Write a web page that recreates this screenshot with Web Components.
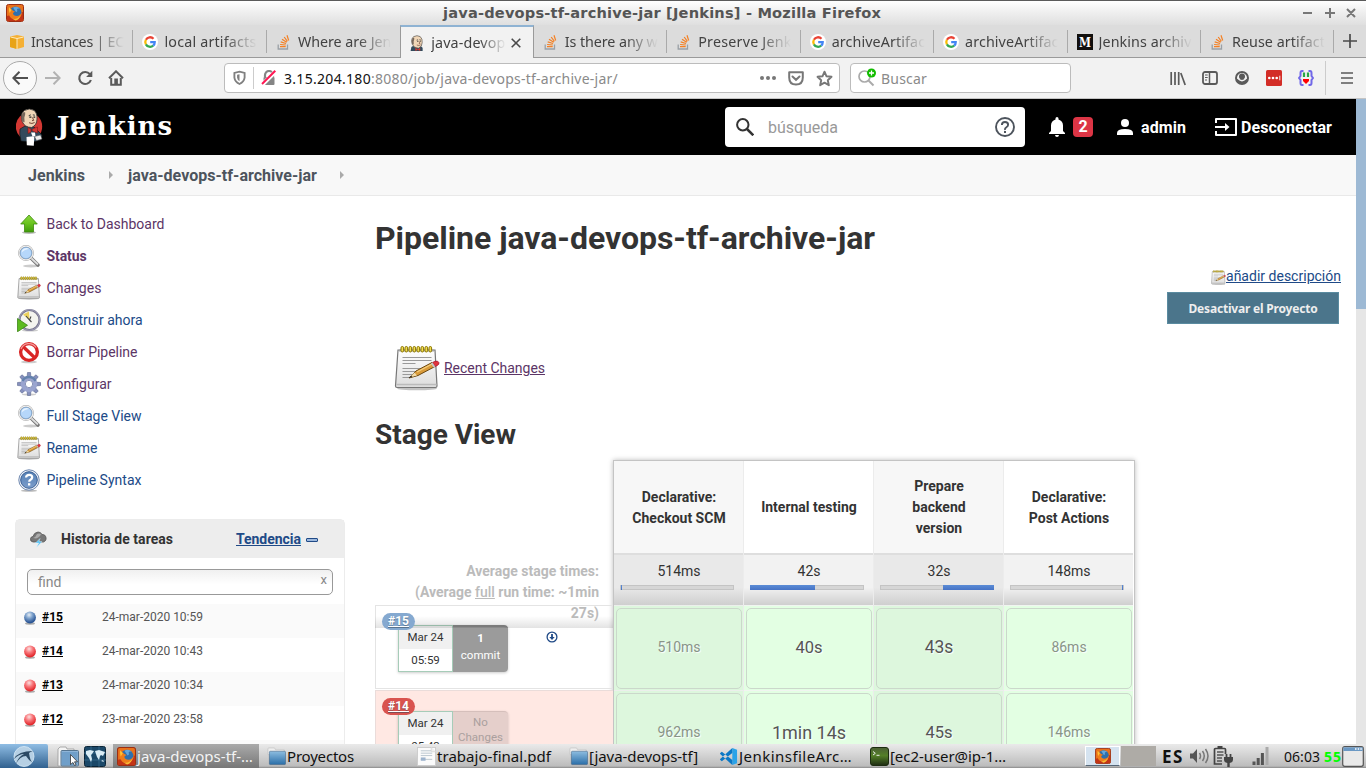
<!DOCTYPE html>
<html lang="es">
<head>
<meta charset="utf-8">
<title>java-devops-tf-archive-jar [Jenkins]</title>
<style>
html,body{margin:0;padding:0;width:1366px;height:768px;overflow:hidden;background:#fff;font-family:Roboto,sans-serif}
</style>
</head>
<body>
<desktop-screen></desktop-screen>
<script>
const define = (name, css, render) => customElements.define(name, class extends HTMLElement {
  constructor() { super(); this.attachShadow({mode: 'open'}); }
  connectedCallback() {
    if (this.ready) return;
    this.ready = true;
    this.shadowRoot.innerHTML = `<style>*{box-sizing:border-box}${css}</style>${render(k => this.getAttribute(k) || '', this)}`;
  }
});

const rings = [7, 11, 15, 19, 23, 27, 31, 35].map(x => `<rect x="${x}" y="1.500" width="2.600" height="5.500" rx="1.300"/>`).join('');
const notepad = `<g><ellipse cx="23" cy="43.500" rx="20" ry="1.800" fill="#999" opacity=".6"/><path d="M4 5h37l2 36q0 1.500-1.500 1.500H3q-1.500 0-1.500-1.500z" fill="url(#np)" stroke="#777" stroke-width="1.200"/><path d="M2.500 39.500h40" stroke="#bbb" stroke-width="1.600"/><path d="M8.500 12.500h29M8.500 15.500h29M8.500 18.500h13M8.500 23.500h28M8.500 26.500h20M8.500 29.500h14M8.500 32.500h8" stroke="#999" stroke-width="1"/><path d="M5 5.500h35" stroke="#a5a5a5" stroke-width="2"/><g fill="#f0dc50" stroke="#8a7400" stroke-width="1">${rings}</g><path d="M15 33l7-7 16-8.500 3 4-17 9z" fill="#d99b3a" stroke="#6b4710" stroke-width="1"/><path d="M23 27l15-8" stroke="#f6cf7d" stroke-width="1.300"/><path d="M15.500 32.500l5-5 2.500 3z" fill="#f2dca8"/><path d="M14.500 33l2.500-2.200 1.500 1.200z" fill="#222"/><path d="M38.500 17.500l2.500-1.300q3.300-.7 4 1.500.2 1.800-1.200 2.500l-2.500 1.400z" fill="#e0343c" stroke="#902" stroke-width=".6"/><path d="M36.800 18.400l1.700-.9 2.800 4.100-1.700.9z" fill="#c4c4c4"/></g><defs><linearGradient id="np" x2="0" y2="1"><stop offset="0" stop-color="#fff"/><stop offset="1" stop-color="#dcdcdc"/></linearGradient></defs>`;
const face = `<path d="M4 11Q2 4 6 1.500Q10-.8 14 1.500Q17 4 16.500 9Q16.500 14 12 16Q6 16 4 11z" fill="#f0d6b7" stroke="#333" stroke-width=".7"/><path d="M4.800 3Q2.600 6 4 11L6 11.500 5.800 7.500 6.500 5 6.500 3z" fill="#77685c"/><path d="M9.500 6l1.800-.7M13 5.300l1.700.3" stroke="#333" stroke-width=".8"/><path d="M10 7.300h1.800M13.500 7.200h1.500" stroke="#222" stroke-width="1"/><path d="M12.700 7.500l1 2.500-1.400.2M9.800 12q2.500 1.300 4.700-.2" fill="none" stroke="#6b3d2c" stroke-width=".8"/>`;
const mascotHead = `<path d="M2 20l1-5 3-2 8 0 3 3v4z" fill="#324a5c"/><g transform="translate(0 .5)">${face}</g><path d="M8 20v-4l3 2 3-2v4l-3-1.500z" fill="#d33833"/>`;
const lens = `<ellipse cx="14" cy="22" rx="8" ry="1.400" fill="#ccc"/><path d="M14 14l7 7" stroke="#777" stroke-width="3.600" stroke-linecap="round"/><path d="M14 14l7 6.500" stroke="#ddd" stroke-width="1.800"/><circle cx="9" cy="9" r="6.800" fill="#b6d7fa" stroke="#a5a5a5" stroke-width="2.200"/><circle cx="9" cy="9" r="6.900" fill="none" stroke="#eee" stroke-width="1.100"/><circle cx="9" cy="9" r="5.700" fill="none" stroke="#6f9dd0" stroke-width=".6"/><path d="M4.500 8.500a5 5 0 0 1 7.500-3.800Q7 6 4.500 8.500" fill="#e6f3ff"/>`;
const firefox = `<rect x=".5" y=".5" width="17" height="17" rx="2" fill="#e8711b" stroke="#9c2e12"/><path d="M1 12V17h16V8z" fill="#c33416"/><circle cx="9.500" cy="8.500" r="6" fill="#2f70ad"/><path d="M7 3.500q4-2 7 1-3-.5-3 1 1 2-1 2.500z" fill="#63a7dd"/><path d="M3 3Q1 10 5 14q5 3 9-1 2-2 2-5-2 4-5 4-4 0-4-3l2-1.500-2-.8z" fill="#ef7d1a"/><path d="M3 3q-.5 3 .5 6l2-3z" fill="#ffc234"/><path d="M5 14q5 3 10-3-2 5-5.500 5.500z" fill="#f9bb35"/>`;
const folder = `<path d="M1 2q0-1 1-1h6l1 2h9v5H1z" fill="#eee" stroke="#bbb" stroke-width=".6"/><rect x="2.500" y="4.500" width="17" height="14" rx="1" fill="url(#fo)" stroke="#357" stroke-width=".5"/><defs><linearGradient id="fo" x2="0" y2="1"><stop stop-color="#8dbde0"/><stop offset="1" stop-color="#2a6ea8"/></linearGradient></defs>`;

const ICONS = {
  firefox: [18, 18, firefox],
  aws: [16, 16, `<path d="M1 2.500L8 1l7 1.500V13l-7 2-7-2z" fill="#f5b034"/><path d="M1 3l7 1.500V15l-7-2z" fill="#e8a317"/><path d="M8 4.500V15M1.500 3l6.500 1.500L14.500 3" stroke="#fff1cc" stroke-width=".9" fill="none"/>`],
  google: [16, 16, `<circle cx="8" cy="8" r="8" fill="#fff"/><g fill="none" stroke-width="2.300"><path d="M11.500 4.700A4.800 4.800 0 0 0 3.900 5.700" stroke="#ea4335"/><path d="M3.900 5.700a4.800 4.800 0 0 0 0 4.700" stroke="#fbbc05"/><path d="M3.900 10.400a4.800 4.800 0 0 0 7.300 1.200" stroke="#34a853"/><path d="M11.200 11.600A4.600 4.600 0 0 0 12.700 8.200H8.200" stroke="#4285f4"/></g>`],
  stack: [16, 16, `<path d="M2.200 10.500v4.500h9.300v-4.500" stroke="#9aa0a6" stroke-width="1.300" fill="none"/><path d="M4 12.700h5.700M4.100 10.500l5.700.5M4.700 7.900l5.400 1.600M6 5.200l4.700 3M8.200 3l3.200 4.300M11 1.200l1.700 5.300" stroke="#f48024" stroke-width="1.200"/>`],
  head: [20, 20, mascotHead],
  medium: [16, 16, `<rect width="16" height="16" fill="#12100e"/><text x="8" y="12.700" font-family="DejaVu Serif,serif" font-weight="bold" font-size="12.500" textLength="12" lengthAdjust="spacingAndGlyphs" fill="#fff" text-anchor="middle">M</text>`],
  plus: [14, 14, `<path d="M7 0v14M0 7h14" stroke="#4a4a4a" stroke-width="1.700"/>`],
  close: [10, 10, `<path d="M.7.700l8.600 8.600M9.300.700L.7 9.300" stroke="#4a4a4a" stroke-width="1.600"/>`],
  back: [16, 14, `<path d="M16 7H1.500M7.500.8L1.300 7l6.200 6.200" fill="none" stroke="#505050" stroke-width="2"/>`],
  forward: [16, 14, `<path d="M0 7h14.500M8.500.8L14.700 7l-6.200 6.200" fill="none" stroke="#b2b2b2" stroke-width="2"/>`],
  reload: [16, 16, `<path d="M12.900 4.200A6 6 0 1 0 13.900 10" fill="none" stroke="#5a5a5a" stroke-width="2.100"/><path d="M15.300.8v6.200H9.100z" fill="#5a5a5a"/>`],
  home: [16, 16, `<path d="M1 8.300L8 1.300l7 7" fill="none" stroke="#5a5a5a" stroke-width="2"/><path d="M3.200 8v6.800h9.600V8" fill="none" stroke="#5a5a5a" stroke-width="2"/><rect x="6.300" y="8.500" width="3.600" height="6.500" fill="#5a5a5a"/>`],
  shield: [14, 16, `<path d="M7 1.200l5.500 1.300v5.200Q12 12 7 14.500 2 12 1.500 7.700V2.500z" fill="none" stroke="#808080" stroke-width="2"/><path d="M7 4l-2.600.6v3Q4.800 10 7 11.500z" fill="#808080"/>`],
  insecure: [16, 16, `<path d="M4 7V5a4 4 0 0 1 8 0v2" fill="none" stroke="#858585" stroke-width="2.200"/><rect x="2.500" y="7" width="11" height="8" rx="1" fill="#858585"/><path d="M1.500 14.500L14.500 1.500" stroke="#fff" stroke-width="4"/><path d="M1 14L14.300.8" stroke="#ff1652" stroke-width="2"/>`],
  dots: [16, 4, `<circle cx="2" cy="2" r="2" fill="#777"/><circle cx="8" cy="2" r="2" fill="#777"/><circle cx="14" cy="2" r="2" fill="#777"/>`],
  pocket: [16, 15, `<path d="M1.200 1.300h13.600V6.500q0 7-6.800 7-6.800 0-6.800-7z" fill="none" stroke="#777" stroke-width="2" stroke-linejoin="round"/><path d="M4.500 5.500L8 8.800l3.500-3.300" fill="none" stroke="#777" stroke-width="2" stroke-linecap="round"/>`],
  star: [16, 16, `<path d="M8 1.600l1.900 4.300 4.700.5-3.500 3.200 1 4.700L8 11.900l-4.100 2.400 1-4.700L1.400 6.400l4.700-.5z" fill="none" stroke="#777" stroke-width="1.800" stroke-linejoin="round"/>`],
  searchadd: [20, 20, `<circle cx="7.500" cy="8.500" r="5.500" fill="none" stroke="#aaa" stroke-width="1.700"/><path d="M11.500 12.500l5 5" stroke="#aaa" stroke-width="2"/><circle cx="14.500" cy="5" r="4.500" fill="#12bc00"/><path d="M14.500 2.500v5M12 5h5" stroke="#fff" stroke-width="1.300"/>`],
  library: [16, 15, `<path d="M1.200 1v13M5 1v13M8.700 1v13" stroke="#5a5a5a" stroke-width="1.700"/><path d="M10.800 2l4.400 12" stroke="#5a5a5a" stroke-width="1.700"/>`],
  sidebar: [16, 14, `<rect x="1" y="1" width="14" height="12" rx="2" fill="none" stroke="#5a5a5a" stroke-width="1.800"/><path d="M7.500 1v12" stroke="#5a5a5a" stroke-width="1.500"/><path d="M3 4h2.700M3 6.500h2.700M3 9h2" stroke="#5a5a5a"/>`],
  account: [14, 14, `<circle cx="7" cy="7" r="6" fill="none" stroke="#5a5a5a" stroke-width="2"/><circle cx="7" cy="5.500" r="3" fill="#5a5a5a"/><path d="M2 8h10v4H2z" fill="#5a5a5a"/><path d="M3.200 7.800q3.800 3.800 7.600 0" fill="none" stroke="#f2f2f2" stroke-width="1.500"/>`],
  lastpass: [16, 16, `<rect width="16" height="16" rx="1.500" fill="#d32d27"/><circle cx="3.300" cy="8" r="1.300" fill="#fff"/><circle cx="7" cy="8" r="1.300" fill="#fff"/><circle cx="10.700" cy="8" r="1.300" fill="#fff"/><path d="M13.800 5.700v4.600" stroke="#fff" stroke-width=".9"/>`],
  json: [16, 16, `<path d="M5.500 1H4Q2.500 1 2.500 3v3L1 8l1.500 2v3q0 2 1.500 2h1.500M10.500 1h1.500q1.500 0 1.500 2v3L15 8l-1.500 2v3q0 2-1.500 2h-1.500" fill="none" stroke="#7168e8" stroke-width="2"/><path d="M6 2.500v4.500M10 2.500v4.500" stroke="#28a745" stroke-width="2.200"/><path d="M5 9h6v2l-3 3-3-3z" fill="#f00"/>`],
  menu: [12, 14, `<path d="M0 2h12M0 7h12M0 12h12" stroke="#5a5a5a" stroke-width="1.700"/>`],
  mascot: [28, 38, `<ellipse cx="13" cy="18.500" rx="13.200" ry="13.800" fill="#d33833"/><path d="M5 33Q3 25 4 21l5-3 9 1 4 4 4 4-1 5-8 2z" fill="#324a5c" stroke="#111" stroke-width=".6"/><g transform="translate(1.500 .6) scale(1.180)">${face}</g><path d="M12 19.500l3 1.500v3l-3 1.500zM15.500 22l2-1.500 4-1.500v6l-4-1.500z" fill="#d33833" stroke="#7a1410" stroke-width=".5"/><path d="M15 24.500h4l.5 4-3 0z" fill="#fff"/><path d="M10.500 29l6.500-.8 1.300 1-.5 8.500-7-.5z" fill="#fff"/><path d="M18.500 28.500l6-1.500 1.500 4-5.500 1.500z" fill="#eee" stroke="#555" stroke-width=".5"/>`],
  search: [18, 18, `<circle cx="6.800" cy="6.800" r="5.700" fill="none" stroke="#333" stroke-width="2"/><path d="M11 11l6.300 6.300" stroke="#333" stroke-width="2.500"/>`],
  help: [20, 20, `<circle cx="10" cy="10" r="9" fill="none" stroke="#4d545d" stroke-width="1.900"/><path d="M6.900 8q0-3 3.100-3t3.100 2.800q0 1.500-1.700 2.500T10 13" fill="none" stroke="#4d545d" stroke-width="1.900"/><rect x="9" y="14" width="2" height="2" fill="#4d545d"/>`],
  bell: [16, 20, `<path d="M6.500 2.500V1.500a1.500 1.500 0 0 1 3 0v1Q14 4 14 8.500V14l2 2v1H0v-1l2-2V8.500Q2 4 6.500 2.500M6 18h4q-.2 2-2 2t-2-2" fill="#fff"/>`],
  user: [16, 16, `<circle cx="8" cy="4" r="4" fill="#fff"/><path d="M0 16v-2q0-4 8-4t8 4v2z" fill="#fff"/>`],
  logout: [22, 18, `<path d="M1 5V1h20v16H1v-4" fill="none" stroke="#fff" stroke-width="2" stroke-linejoin="round"/><path d="M0 9h12" stroke="#fff" stroke-width="2"/><path d="M10 5l4.500 4L10 13z" fill="#fff"/>`],
  up: [24, 24, `<ellipse cx="12" cy="20.500" rx="7" ry="1.500" fill="#bbb"/><path d="M12 3L20.300 12H16.500v8h-9v-8H3.700z" fill="url(#gr)" stroke="#3e8a0e" stroke-width=".8"/><defs><linearGradient id="gr" x2="0" y2="1"><stop stop-color="#8bd63e"/><stop offset=".5" stop-color="#69c41e"/><stop offset="1" stop-color="#3f9a0b"/></linearGradient></defs>`],
  lens: [24, 24, lens],
  notepad: [46, 46, notepad],
  clock: [24, 24, `<ellipse cx="13" cy="22.500" rx="8" ry="1" fill="#ccc"/><circle cx="12.500" cy="12" r="10" fill="#f4f4ef" stroke="#77758f" stroke-width="2.200"/><circle cx="12.500" cy="12" r="10.300" fill="none" stroke="#b3b1c7" stroke-width=".7"/><path d="M12.500 12L6 6.500 12 3.500z" fill="#ecd15e"/><path d="M9 8l3.500 4 1.500-3.500M12.500 12l2 2" fill="none" stroke="#444" stroke-width="1.100"/><path d="M.5 10.500L10.500 17.300.5 23.800z" fill="#5dbb20" stroke="#2f7a0a" stroke-width=".7"/>`],
  forbid: [24, 24, `<ellipse cx="12" cy="22" rx="8" ry="1.300" fill="#ccc"/><circle cx="12" cy="12" r="8.400" fill="#fff" stroke="#d92626" stroke-width="3.300"/><path d="M6 6.500l12 11.500" stroke="#d92626" stroke-width="3.300"/><path d="M4 9a8.500 8.500 0 0 1 15-1.500" fill="none" stroke="#f29a9a" stroke-width="1.300"/>`],
  gear: [24, 24, `<ellipse cx="12" cy="22.500" rx="7" ry="1" fill="#ccc"/><g fill="#8690bd" stroke="#5d6a91" stroke-width=".6">${[0, 45, 90, 135, 180, 225, 270, 315].map(r => `<path transform="rotate(${r} 12 12)" d="M10 6l.5-5.500h3L14 6z"/>`).join('')}</g><circle cx="12" cy="12" r="6" fill="none" stroke="#9aa4cf" stroke-width="4.500"/><circle cx="12" cy="12" r="3.700" fill="#fff" stroke="#6a76a3" stroke-width=".8"/><path d="M5.500 9a7.300 7.300 0 0 1 13 0" fill="none" stroke="#6482ad" stroke-width="2.500"/>`],
  question: [24, 24, `<ellipse cx="12" cy="22.700" rx="8" ry="1" fill="#bbb"/><circle cx="12" cy="12" r="10.200" fill="#f4f6fa" stroke="#6d87af" stroke-width="1"/><circle cx="12" cy="12" r="8.300" fill="url(#q)" stroke="#365d94" stroke-width="1"/><path d="M9 9.500q.3-2.700 3.200-2.700 3 0 3 2.500 0 1.500-1.700 2.500-1.300.7-1.300 2" fill="none" stroke="#fff" stroke-width="2.200"/><rect x="11" y="15.200" width="2.300" height="2.300" fill="#fff"/><defs><linearGradient id="q" x2="0" y2="1"><stop stop-color="#5480b5"/><stop offset="1" stop-color="#7c9dcb"/></linearGradient></defs>`],
  storm: [17, 17, `<path d="M3 11Q0 10.500.5 7.500 1 5.500 3 5.500 4 1.500 8 1q3 0 4 2.500 3-.3 3.800 2.300Q17 9.500 13.500 11z" fill="#777" stroke="#555" stroke-width=".8"/><path d="M3 7q3-1 4-4 2-1 4 0-1 3-5 4.500" fill="#aaa"/><path d="M10 7.500L5.500 12h3.200L6.500 16.500l5.500-6H9z" fill="#56c2f5" stroke="#e2f6ff" stroke-width=".4"/>`],
  blue: [14, 14, `<ellipse cx="7" cy="12.500" rx="5" ry="1.200" fill="#aaa"/><circle cx="7" cy="6.500" r="5.900" fill="url(#b)"/><defs><radialGradient id="b" cx=".42" cy=".28" r=".65"><stop stop-color="#e6eef5"/><stop offset=".45" stop-color="#7fa3cd"/><stop offset="1" stop-color="#2a5595"/></radialGradient></defs>`],
  red: [14, 14, `<ellipse cx="7" cy="12.500" rx="5" ry="1.200" fill="#aaa"/><circle cx="7" cy="6.500" r="5.900" fill="url(#r)"/><defs><radialGradient id="r" cx=".42" cy=".28" r=".7"><stop stop-color="#fbe0e0"/><stop offset=".45" stop-color="#f8787c"/><stop offset="1" stop-color="#e02226"/></radialGradient></defs>`],
  download: [12, 12, `<circle cx="6" cy="6" r="4.900" fill="#fff" stroke="#204a87" stroke-width="1.300"/><path d="M5.100 3h1.800v3h1.800L6 9 3.300 6h1.800z" fill="#204a87"/>`],
  folder: [20, 20, folder],
  files: [22, 21, `<path d="M1 20V3l2-2h6l1 2h7v17z" fill="#f4f4f4" stroke="#999" stroke-width=".8"/><rect x="4" y="4.500" width="17.500" height="15.500" rx="1" fill="#8fb5d8" stroke="#55748f"/><rect x="5" y="6" width="15.500" height="13" fill="#709fc9"/><path d="M13.500 8.500v10l2.500-2 1.500 3 1.500-.7-1.500-3h3z" fill="#fff" stroke="#333" stroke-width=".8"/>`],
  globe: [22, 21, `<rect x=".5" y=".5" width="21" height="20" rx="2" fill="#1b4868" stroke="#0b2437"/><path d="M0 7h22M0 14h22M7 0v21M15 0v21" stroke="#45799c" stroke-width=".6"/><path d="M2 5l4-1 4 1-2 3-1 1 1 4-1 3-2-4-3-4zM11 5l4-1 6 2-2 4-2-1-1 1-1 4-2-3-1-3zM17 15l2-1 1 2z" fill="#d9ecf5"/>`],
  bird: [22, 21, `<circle cx="11" cy="10.500" r="10" fill="#b6d0e4" stroke="#d9ebf7" stroke-width=".8"/><path d="M1 13Q5 5 20 5q-3 1-4 2 1 8 4 10-4-2-7-7Q7 10 3 18q2-7 8-10-5 0-10 5" fill="#2d4b65"/>`],
  pdf: [20, 20, `<rect x=".5" y=".5" width="19" height="19" fill="#fbfbfb" stroke="#ccc"/><path d="M4 4h11M4 6.500h12M4 9h12M4 13h12" stroke="#b3bfca" stroke-width=".9"/><rect x="4" y="11" width="5" height="3.500" fill="#9db3cd"/><path d="M15 0v5h5" fill="#eee" stroke="#ccc" stroke-width=".6"/>`],
  vscode: [20, 20, `<path d="M14 1l5 2v14l-5 2z" fill="#2ba3e8"/><path d="M14 1L1.500 12.300 1 13.500l2 1.500L14 6.200zM14 19L1.500 7.700 1 6.500 3 5l11 8.800z" fill="#0b78c6"/>`],
  term: [19, 19, `<rect x=".5" y=".5" width="18" height="18" rx="2.500" fill="url(#t)" stroke="#1c2c10"/><path d="M3 4.500l2.300 1.800L3 8M6.500 8.300h3" fill="none" stroke="#eee" stroke-width="1"/><defs><linearGradient id="t" x2="0" y2="1"><stop stop-color="#4b5f35"/><stop offset=".45" stop-color="#547f28"/><stop offset="1" stop-color="#1d2b12"/></linearGradient></defs>`],
  volume: [20, 18, `<path d="M0 6.500h3l4-4.500v14L3 11.500H0z" fill="#555"/><path d="M9.500 6q2 3 0 6M12.500 4q3.500 5 0 10M15.500 2q5 7 0 14" fill="none" stroke="#777" stroke-width="1.500"/>`],
  battery: [21, 21, `<path d="M4.500 0h5v3h-5z" fill="#444"/><path d="M9 18H1.500V3.500Q1.500 2.500 2.500 2.500h9q1 0 1 1V8" fill="none" stroke="#444" stroke-width="1.700"/><path d="M4 6h6.500M4 9h6.500M4 12h5M4 15h5" stroke="#555" stroke-width="1.700"/><path d="M11 11h9v2.500q0 3-3.300 3.500v4h-2.400v-4q-3.300-.5-3.300-3.500z" fill="#444"/><path d="M13.500 8v3M17.500 8v3" stroke="#444" stroke-width="1.800"/>`],
  signal: [17, 18, `<path d="M2 18v-3.500M6.200 18v-7M10.400 18V6" stroke="#555" stroke-width="3"/><path d="M15 18V0" stroke="#aaa" stroke-width="3"/>`],
  window: [22, 21, `<rect x=".7" y=".7" width="20.600" height="19.600" rx="2" fill="#e9e9e9" stroke="#555" stroke-width="1.200"/><path d="M1.300 1.300h19.400V5H1.300z" fill="#6a98c4"/><path d="M13 3h1.500M15.700 3h1.500M18.300 3h1.500" stroke="#fff" stroke-width="1.400"/>`]
};

define('ui-icon', `:host{display:block;flex:none;line-height:0}svg{display:block}`, a => {
  const [w, h, body] = ICONS[a('name')];
  return `<svg width="${a('w') || w}" height="${a('h') || h}" viewBox="0 0 ${w} ${h}">${body}</svg>`;
});

customElements.define('fit-text', class extends HTMLElement {
  constructor() {
    super();
    this.attachShadow({mode: 'open'}).innerHTML = `<style>:host{display:inline-block;white-space:nowrap;flex:none}</style><span><slot></slot></span>`;
  }
  connectedCallback() {
    const span = this.shadowRoot.querySelector('span');
    const w = +this.getAttribute('w'), n = this.textContent.length;
    if (w) span.style.letterSpacing = ((w - span.getBoundingClientRect().width) / n).toFixed(3) + 'px';
  }
});

define('title-bar', `:host{display:grid;grid-template-columns:443px 1fr 64px;align-items:center;height:25px;border-top:1px solid #5a5a5a;background:linear-gradient(#fff,#f4f4f4 30%,#dfdfdf);color:#555;font:bold 14.600px "DejaVu Sans",sans-serif}
ui-icon{margin-left:6px}svg{display:block}fit-text{justify-self:start;margin-top:-2px}`,
() => `<ui-icon name="firefox"></ui-icon><fit-text w="438">java-devops-tf-archive-jar [Jenkins] - Mozilla Firefox</fit-text><svg width="62" height="12"><path d="M1 6h9M23 6h10M28 1v10M45 2l8 8M53 2l-8 8" stroke="#777" stroke-width="2"/></svg>`);

define('browser-tab', `:host{display:flex;align-items:center;width:133.450px;height:33px;padding:1px 0 0 9px;position:relative;border-bottom:1px solid #9a9a9a;font:14.300px "Noto Sans",sans-serif;color:#424242}
:host::after{content:"";position:absolute;right:0;top:5px;width:1px;height:23px;background:#aaa}
:host([active]){background:#f2f2f2;border:1px solid #9a9a9a;border-top:2px solid #8fb3d3;border-bottom:0;padding-left:8px;padding-top:0}
:host([active])::after,:host([last-before])::after{display:none}
.t{width:94px;margin-left:6px;overflow:hidden;white-space:nowrap;-webkit-mask-image:linear-gradient(90deg,#000 64%,transparent 99%)}
:host([active]) .t{width:76px}:host([active]) .x{margin-left:4px}`,
a => `<ui-icon name="${a('icon')}" w="16" h="16"></ui-icon><div class="t"><fit-text w="${a('w')}">${a('label')}</fit-text></div>${a('close') ? '<ui-icon class="x" name="close"></ui-icon>' : ''}`);

define('tab-strip', `:host{display:flex;height:33px;background:#dcdcdc}.n{flex:1;border-bottom:1px solid #9a9a9a;padding:9px 0 0 9px}`,
() => `<browser-tab icon="aws" label="Instances | EC" w="93"></browser-tab><browser-tab icon="google" label="local artifacts" w="92"></browser-tab><browser-tab icon="stack" label="Where are Jen" w="93.500" last-before></browser-tab><browser-tab active icon="head" label="java-devop" w="74" close="1"></browser-tab><browser-tab icon="stack" label="Is there any w" w="93"></browser-tab><browser-tab icon="stack" label="Preserve Jenk" w="93.500"></browser-tab><browser-tab icon="google" label="archiveArtifac" w="93.500"></browser-tab><browser-tab icon="google" label="archiveArtifac" w="93.500"></browser-tab><browser-tab icon="medium" label="Jenkins archiv" w="93"></browser-tab><browser-tab icon="stack" label="Reuse artifact" w="93"></browser-tab><div class="n"><ui-icon name="plus"></ui-icon></div>`);

define('nav-bar', `:host{display:flex;align-items:center;height:41px;background:#f2f2f2;border-bottom:1px solid #c4c4c4;font:14px "Noto Sans",sans-serif;color:#8a8a8a;padding-left:3px}
.b{width:34px;height:34px;border:1px solid #aaa;border-radius:50%;background:#fafafa;display:grid;place-items:center;margin-right:8px}
.f{height:30px;border:1px solid #bcbcbc;border-radius:4px;background:#fff;display:flex;align-items:center}
.u{width:616px;margin-left:100px;padding-left:8px}.s{width:221px;margin-left:10px;padding-left:6px}i{width:1px;background:#ccc;flex:none}`,
() => `<div class="b"><ui-icon name="back"></ui-icon></div><ui-icon name="forward"></ui-icon><ui-icon name="reload" style="margin-left:16px"></ui-icon><ui-icon name="home" style="margin-left:15px"></ui-icon>
<div class="f u"><ui-icon name="shield" w="13"></ui-icon><i style="height:22px;margin:0 7px 0 7px"></i><ui-icon name="insecure"></ui-icon><fit-text w="87" style="color:#111;margin-left:7px">3.15.204.180</fit-text><fit-text w="247">:8080/job/java-devops-tf-archive-jar/</fit-text><ui-icon name="dots" style="margin-left:142px"></ui-icon><ui-icon name="pocket" style="margin-left:12px"></ui-icon><ui-icon name="star" w="17" h="17" style="margin-left:12px"></ui-icon></div>
<div class="f s"><ui-icon name="searchadd"></ui-icon><fit-text w="46" style="margin-left:4px">Buscar</fit-text></div>
<ui-icon name="library" style="margin-left:99px"></ui-icon><ui-icon name="sidebar" style="margin-left:16px"></ui-icon><ui-icon name="account" style="margin-left:17px"></ui-icon><ui-icon name="lastpass" style="margin-left:17px"></ui-icon><ui-icon name="json" style="margin-left:16px"></ui-icon><i style="height:34px;margin:0 15px 0 11px"></i><ui-icon name="menu"></ui-icon>`);

define('jenkins-header', `:host{display:flex;align-items:center;height:56px;background:#000;color:#fff;padding-left:16px;font:bold 16px Roboto,sans-serif}
.l{font:bold 26px/30px "DejaVu Serif",serif;margin:-2px 0 0 13px}
.s{display:flex;align-items:center;width:300px;height:40px;border-radius:4px;background:#fff;color:#999;font-weight:400;margin-left:552px;padding:0 10px 0 11px}
.s fit-text{flex:1;margin-left:14px}.n{width:20px;height:20px;border-radius:4px;background:#dc3545;text-align:center;line-height:20px;margin:0 24px 0 8px}`,
() => `<ui-icon name="mascot"></ui-icon><fit-text class="l" w="116">Jenkins</fit-text><div class="s"><ui-icon name="search"></ui-icon><fit-text w="70">búsqueda</fit-text><ui-icon name="help"></ui-icon></div><ui-icon name="bell" style="margin-left:24px"></ui-icon><div class="n">2</div><ui-icon name="user"></ui-icon><fit-text w="45" style="margin-left:8px">admin</fit-text><ui-icon name="logout" style="margin-left:29px"></ui-icon><fit-text w="91" style="margin-left:4px">Desconectar</fit-text>`);

define('bread-crumbs', `:host{display:flex;align-items:center;height:41px;background:#f8f8f8;border-bottom:1px solid #e9e9e9;font:bold 16px Roboto,sans-serif;color:#4d545d;padding-left:28px}i{border-left:4px solid #aaa;border-top:4px solid transparent;border-bottom:4px solid transparent;margin:0 15px 0 24px}`,
() => `<fit-text w="57">Jenkins</fit-text><i></i><fit-text w="189">java-devops-tf-archive-jar</fit-text><i style="margin-left:23px"></i>`);

define('side-link', `:host{display:flex;align-items:center;height:32px;padding-left:2px;color:#204a87;font-size:14px}:host([seen]){color:#5c3566}:host([bold]){font-weight:700}ui-icon{margin-right:5.500px}`,
a => `<ui-icon name="${a('icon')}" w="24" h="24"></ui-icon><fit-text w="${a('w')}"><slot></slot>${a('label')}</fit-text>`);

define('build-row', `:host{display:flex;height:34px;background:#fff;padding-left:7px;align-items:flex-start}:host([odd]){background:#fafafa}ui-icon{margin-top:7px}
a{font:bold 12px/26px Roboto;color:#000;width:60px;margin-left:5px}a fit-text{text-decoration:underline}span{font:12px/26px Roboto;color:#555}`,
a => `<ui-icon name="${a('ball')}"></ui-icon><a><fit-text w="21">${a('num')}</fit-text></a><span><fit-text w="101">${a('date')}</fit-text></span>`);

define('build-history', `:host{display:block;width:330px;height:240px;margin-top:23px;border:1px solid #ececec;border-radius:5px 5px 0 0}
header{display:flex;align-items:center;height:38px;background:#ededed;font:bold 14px Roboto;color:#333;padding-left:14px}
a{color:#204a87;margin-left:63px}a fit-text{text-decoration:underline}i{width:12px;height:4px;border:1px solid #204a87;background:#9cb8dd;border-radius:1px;margin:2px 0 0 5px}
.f{display:flex;justify-content:space-between;width:306px;height:26px;margin:11px 11px 9px;padding:0 5px 0 10px;border:1px solid #999;border-radius:5px;background:linear-gradient(#f0f0f0,#fff 60%);color:#888;font:14px/25px Roboto}small{font:13px/20px Roboto}`,
() => `<header><ui-icon name="storm"></ui-icon><fit-text w="112" style="margin-left:14px">Historia de tareas</fit-text><a><fit-text w="65">Tendencia</fit-text></a><i></i></header><div class="f"><span>find</span><small>x</small></div>
<build-row odd ball="blue" num="#15" date="24-mar-2020 10:59"></build-row><build-row ball="red" num="#14" date="24-mar-2020 10:43"></build-row><build-row odd ball="red" num="#13" date="24-mar-2020 10:34"></build-row><build-row ball="red" num="#12" date="23-mar-2020 23:58"></build-row><build-row odd ball="red" num="" date=""></build-row>`);

define('side-panel', `:host{display:block;width:345px;padding:12px 0 0 15px;flex:none}`,
() => [['up','Back to Dashboard',118,'seen'],['lens','Status',40,'seen bold'],['notepad','Changes',55,'seen'],['clock','Construir ahora',96,''],['forbid','Borrar Pipeline',91,'seen'],['gear','Configurar',65,'seen'],['lens','Full Stage View',95,''],['notepad','Rename',51,''],['question','Pipeline Syntax',95,'']].map(([i,l,w,s]) => `<side-link icon="${i}" label="${l}" w="${w}" ${s}></side-link>`).join('') + '<build-history></build-history>');

define('stage-column', `:host{display:block;width:130px;border-right:1px solid #ececec;color:#333;text-align:center;background:#f1f5f1;--h:#fff;--a:#f2f2f2;--c:#e3ffe3}
:host([alt]){--h:#f7f7f7;--a:#e9e9e9;--c:#ddf7dd;background:#ecefec}
.h{height:92px;display:flex;align-items:center;justify-content:center;padding-left:1px;background:var(--h);font:bold 14px/21px Roboto}
.h>div{padding-top:1px}
.a{height:52px;border-top:2px solid #dedede;background:linear-gradient(var(--a) 65%,#cfcfcf);font:14px/33px Roboto;padding-left:1px}
.m{display:grid;grid-template-columns:var(--l) var(--v) 1fr;width:114px;height:5px;margin:-3px auto 0 5px;background:#d6d6d6;border:1px solid #c4c4c4;border-width:1px 1px 1px}
.m i{grid-column:2;background:linear-gradient(#5b8cd6,#4673c5);margin:-1px -1px}
.edge i{margin:-1px 0}
.r{height:84px;padding:2px 1px 0 2px;background:var(--c);margin-top:1px}
.c{height:81px;border:1px solid #cbd8cb;border-radius:5px;background:var(--c);display:grid;place-items:center;padding-bottom:3px;text-shadow:1px 1px 1px #fff}`,
a => `<div class="h"><div>${a('name').split('|').map(s => `<div>${s}</div>`).join('')}</div></div><div class="a"><div>${a('avg')}</div><div class="m ${a('v') === '1' ? 'edge' : ''}" style="--l:${a('l')}px;--v:${a('v')}px"><i></i></div></div>` +
 [['t1','s1'],['t2','s2']].map(([t,s]) => { const z = +a(s); return `<div class="r"><div class="c" style="font-size:${z}px;color:${z > 15 ? '#555' : '#889488'}">${a(t)}</div></div>`; }).join(''));

define('build-run', `:host{display:block;position:relative;height:84px;border:1px solid #e4e4e4;border-right:0;padding:19px 0 0 22px;margin-bottom:1px;font-size:11.500px;color:#333}
:host([failed]){background:#ffe8e3;border-color:#eadcda}
.b{position:absolute;left:6px;top:7px;width:33px;height:17px;border-radius:9px;background:#85a9d0;color:#fff;font:bold 12px/17px Roboto;text-align:center;text-decoration:underline;z-index:2;text-shadow:0 1px 1px #3458}
:host([failed]) .b{background:#d9534f}
.g{display:grid;grid-template-columns:55px 55px;height:47px;width:110px;box-shadow:0 1px 3px #0003;border-radius:0 4px 4px 0}
.d{border:1px solid #a6ccb8;background:#fff;text-align:center;line-height:22px}.d div:first-child{background:#f0f0f0;height:23px}
.k{background:#9b9b9b;border-radius:0 4px 4px 0;border-top:2px solid #888;color:#fff;text-align:center;line-height:17px;padding-top:3px}
:host([failed]) .k{background:#e5cfcb;color:#aaa09e;line-height:15px;border-top:1px solid #d5bfbb}
ui-icon{position:absolute;left:170px;top:25px}`,
(a, el) => `<div class="b">${a('num')}</div><div class="g"><div class="d"><div>Mar 24</div><div>${a('time')}</div></div><div class="k">${el.hasAttribute('failed') ? '<div>No</div><div>Changes</div>' : '<b>1</b><div>commit</div>'}</div></div>${el.hasAttribute('failed') ? '' : '<ui-icon name="download"></ui-icon>'}`);

define('stage-view', `:host{display:grid;grid-template-columns:238px 522px}
.runs{padding-top:101px}.avg{height:67px;margin-bottom:-23px;position:relative;z-index:1;text-align:right;padding-right:14px;font:bold 14px/21px Roboto;color:#bbb;background:linear-gradient(transparent 82%,#0000001c)}
.avg u{font-weight:500}.runs build-run:nth-of-type(2){padding-top:20px}
.t{display:flex;border:1px solid #c4c4c4;box-shadow:0 0 5px #0004;height:340px;background:#fff}stage-column:last-child{border-right-color:#fff}`,
() => `<div class="runs"><div class="avg"><div>Average stage times:</div><div>(Average <u>full</u> run time: ~1min</div><div>27s)</div></div><build-run num="#15" time="05:59"></build-run><build-run failed num="#14" time="05:43"></build-run></div>
<div class="t"><stage-column alt name="Declarative:|Checkout SCM" avg="514ms" l="0" v="1" t1="510ms" s1="14" t2="962ms" s2="14"></stage-column><stage-column name="Internal testing" avg="42s" l="0" v="63" t1="40s" s1="16.500" t2="1min 14s" s2="18"></stage-column><stage-column alt name="Prepare|backend|version" avg="32s" l="63" v="49" t1="43s" s1="17.500" t2="45s" s2="16.500"></stage-column><stage-column name="Declarative:|Post Actions" avg="148ms" l="111" v="1" t1="86ms" s1="14" t2="146ms" s2="14"></stage-column></div>`);

define('job-page', `:host{display:block;flex:1;padding-left:30px;color:#333}h1,h2{margin:0;font-family:Roboto}h1{font-size:32px;line-height:38px;height:66px;padding-top:23px}
.d{display:flex;justify-content:flex-end;align-items:center;height:28px;padding-right:15px;font-size:14px;color:#204a87}
.p{display:grid;place-items:center;width:172px;height:32px;margin:2px 17px 0 auto;background:#4b758b;border:1px solid #5a8ba0;color:#eee;font:bold 12px "Noto Sans",sans-serif}
.r{display:flex;align-items:center;height:48px;margin:20px 0 19px 19px;font-size:14px;color:#5c3566}h2{font-size:28px;line-height:48px;height:49px}`,
() => `<h1><fit-text w="500">Pipeline java-devops-tf-archive-jar</fit-text></h1><div class="d"><ui-icon name="notepad" w="15" h="15" style="margin-top:2px"></ui-icon><fit-text w="115" style="text-decoration:underline">añadir descripción</fit-text></div><div class="p"><fit-text w="129">Desactivar el Proyecto</fit-text></div><div class="r"><ui-icon name="notepad" w="46" h="46"></ui-icon><fit-text w="101" style="margin-left:4px;text-decoration:underline">Recent Changes</fit-text></div><h2><fit-text w="141">Stage View</fit-text></h2><stage-view></stage-view>`);

define('task-item', `:host{display:flex;align-items:center;height:24px;font:15px "Noto Sans",sans-serif;color:#111}:host([active]){background:linear-gradient(#aaa,#777);color:#f4f4f4;padding-left:4px}fit-text{margin-left:1px}`,
a => `<ui-icon name="${a('icon')}" w="19" h="19"></ui-icon><fit-text w="${a('w')}">${a('label')}</fit-text>`);

define('task-bar', `:host{display:grid;grid-template-columns:48px 65px 146px 8px 150px 152px 150px 151px 215px 1fr;align-items:center;height:24px;background:linear-gradient(#eaeaea,#bcbcbc 92%,#888);font:14px "Noto Sans",sans-serif;color:#111}
.s{height:24px;background:linear-gradient(#8fbde4,#31618f);display:grid;place-items:center;border-radius:0 2px 0 0}.q{display:flex;gap:5px;padding-left:9px}.r{display:flex;align-items:center}
.w{width:35px;height:20px;background:#d5e3f0;border:1px solid #fff;border-bottom-color:#567;display:grid;place-items:center}.e{width:35px;height:20px;background:#aeaba6;margin:0 6px 0 1px}`,
() => `<div class="s"><ui-icon name="bird"></ui-icon></div><div class="q"><ui-icon name="files"></ui-icon><ui-icon name="globe"></ui-icon></div><task-item active icon="firefox" label="java-devops-tf-…" w="116"></task-item><i></i><task-item icon="folder" label="Proyectos" w="67"></task-item><task-item icon="pdf" label="trabajo-final.pdf" w="114"></task-item><task-item icon="folder" label="[java-devops-tf]" w="109"></task-item><task-item icon="vscode" label="JenkinsfileArc…" w="113"></task-item><task-item icon="term" label="[ec2-user@ip-1…" w="116"></task-item>
<div class="r"><div class="w"><ui-icon name="firefox" w="16" h="16"></ui-icon></div><div class="e"></div><fit-text w="22" style="font:bold 17px 'Noto Sans'">ES</fit-text><ui-icon name="volume" style="margin-left:6px"></ui-icon><ui-icon name="battery" style="margin-left:3px"></ui-icon><ui-icon name="signal" style="margin-left:18px"></ui-icon><fit-text w="36" style="margin-left:15px">06:03</fit-text><fit-text w="18" style="margin-left:4px;color:#0f0;font-weight:700">55</fit-text><ui-icon name="window" style="margin-left:0"></ui-icon></div>`);

define('desktop-screen', `:host{display:grid;grid-template-rows:25px 33px 41px 645px 24px;width:1366px;height:768px;overflow:hidden;font-family:Roboto,sans-serif}
.v{display:grid;grid-template-columns:1356px 10px;height:645px;overflow:hidden}.p{height:645px;overflow:hidden;background:#fff}.c{display:flex}.b{background:#e6e6e6}.b i{display:block;height:210px;background:#9db9d4}`,
() => `<title-bar></title-bar><tab-strip></tab-strip><nav-bar></nav-bar><div class="v"><div class="p"><jenkins-header></jenkins-header><bread-crumbs></bread-crumbs><div class="c"><side-panel></side-panel><job-page></job-page></div></div><div class="b"><i></i></div></div><task-bar></task-bar>`);
</script>
</body>
</html>
